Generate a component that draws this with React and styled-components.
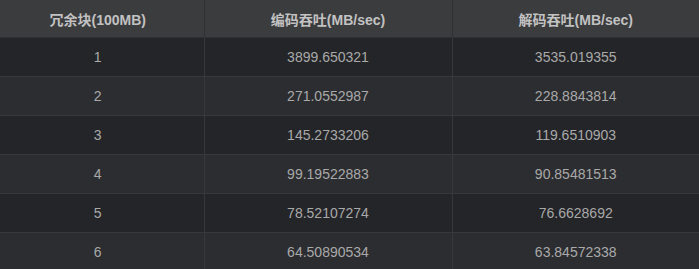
import React from 'react';
import styled, { createGlobalStyle } from 'styled-components';

const GlobalStyle = createGlobalStyle`
  html, body {
    margin: 0;
    padding: 0;
    background: #242528;
    overflow: hidden;
  }
  body {
    font-family: "Liberation Sans", Arial, "Noto Sans CJK SC", sans-serif;
  }
`;

const rows = [
  ['1', '3899.650321', '3535.019355'],
  ['2', '271.0552987', '228.8843814'],
  ['3', '145.2733206', '119.6510903'],
  ['4', '99.19522883', '90.85481513'],
  ['5', '78.52107274', '76.6628692'],
  ['6', '64.50890534', '63.84572338'],
];

// the screenshot crops the table's left edge a little
const Table = styled.table`
  width: 707px;
  margin-left: -8px;
  border-collapse: collapse;
  table-layout: fixed;
  font-size: 14px;
`;

const HeadCell = styled.th`
  height: 37px;
  padding: 0;
  background: #3b3c3e;
  color: #c2c2c2;
  font-weight: bold;
  text-align: center;
  border-right: 1px solid #303133;
  border-bottom: 1px solid #303133;
  &:last-child {
    border-right: none;
  }
`;

const Row = styled.tr`
  background: ${(p) => (p.$odd ? '#242528' : '#2c2d30')};
`;

const Cell = styled.td`
  height: 38px;
  padding: 0;
  color: #a9a9a9;
  text-align: center;
  border-right: 1px solid #37383b;
  border-bottom: 1px solid #37383b;
  &:last-child {
    border-right: none;
  }
`;

export default function App() {
  return (
    <>
      <GlobalStyle />
      <Table>
        <colgroup>
          <col style={{ width: 212 }} />
          <col style={{ width: 248 }} />
          <col />
        </colgroup>
        <thead>
          <tr>
            <HeadCell>冗余块(100MB)</HeadCell>
            <HeadCell>编码吞吐(MB/sec)</HeadCell>
            <HeadCell>解码吞吐(MB/sec)</HeadCell>
          </tr>
        </thead>
        <tbody>
          {rows.map((r, i) => (
            <Row key={r[0]} $odd={i % 2 === 0}>
              {r.map((v, j) => (
                <Cell key={j}>{v}</Cell>
              ))}
            </Row>
          ))}
        </tbody>
      </Table>
    </>
  );
}
